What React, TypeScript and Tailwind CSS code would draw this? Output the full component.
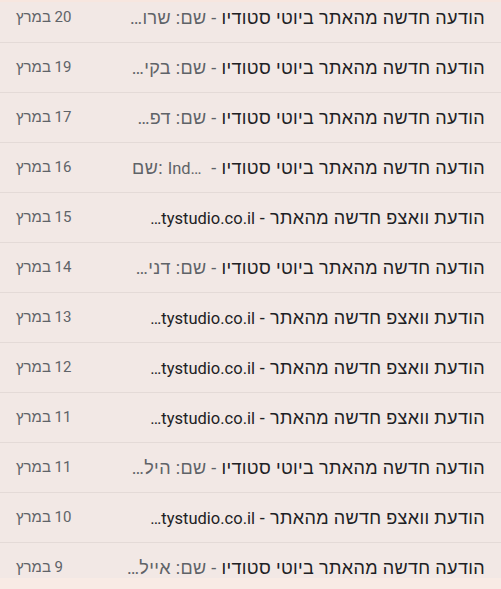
import React from "react";

type Row = { date: string; kind: "name" | "ind" | "wa"; name?: string };

const rows: Row[] = [
  { date: "20 במרץ", kind: "name", name: "שרו…" },
  { date: "19 במרץ", kind: "name", name: "בקי…" },
  { date: "17 במרץ", kind: "name", name: "דפ…" },
  { date: "16 במרץ", kind: "ind" },
  { date: "15 במרץ", kind: "wa" },
  { date: "14 במרץ", kind: "name", name: "דני…" },
  { date: "13 במרץ", kind: "wa" },
  { date: "12 במרץ", kind: "wa" },
  { date: "11 במרץ", kind: "wa" },
  { date: "11 במרץ", kind: "name", name: "היל…" },
  { date: "10 במרץ", kind: "wa" },
  { date: "9 במרץ", kind: "name", name: "אייל…" },
];

function Subject({ row }: { row: Row }) {
  if (row.kind === "wa") {
    return (
      <span className="text-[#202124]">
        הודעת וואצפ חדשה מהאתר -{" "}
        <span dir="ltr" className="text-[16.5px] tracking-normal">
          …tystudio.co.il
        </span>
      </span>
    );
  }
  if (row.kind === "ind") {
    return (
      <span>
        <span className="text-[#202124]">הודעה חדשה מהאתר ביוטי סטודיו</span>
        <span className="text-[#5f6368]">
          {" -\u00a0 "}
          <span dir="ltr">
            שם: <span className="text-[16.5px] tracking-normal">Ind…</span>
          </span>
        </span>
      </span>
    );
  }
  return (
    <span>
      <span className="text-[#202124]">הודעה חדשה מהאתר ביוטי סטודיו</span>
      <span className="text-[#5f6368]">{" - שם: " + row.name}</span>
    </span>
  );
}

export default function App() {
  return (
    <div
      className="w-[501px] h-[589px] flex flex-col bg-[#f2e8e5] overflow-hidden"
      style={{ fontFamily: 'Roboto, "Liberation Sans", sans-serif' }}
      dir="rtl"
    >
      <div className="flex-1 overflow-hidden relative">
        <div className="absolute top-0 left-0 right-0 h-[2px] bg-[#f7e6df]" />
        <div className="-mt-[7px] flex flex-col">
          {rows.map((r, i) => (
            <div
              key={i}
              className="h-[50px] shrink-0 flex items-center justify-between pr-[16px] pl-[16px] border-b border-[#e4dad7]"
            >
              <div className="text-[18px] tracking-[0.35px] whitespace-nowrap">
                <Subject row={r} />
              </div>
              <div className="text-[15px] text-[#5f6368] whitespace-nowrap">{r.date}</div>
            </div>
          ))}
        </div>
      </div>
      <div className="h-[11px] shrink-0 bg-[#f8ebe5]" />
    </div>
  );
}
